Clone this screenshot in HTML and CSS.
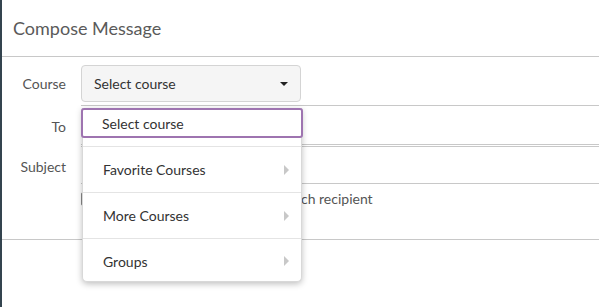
FILE: index.html
```html
<!DOCTYPE html>
<html lang="en">
<head>
    <meta charset="UTF-8">
    <title>Compose Message</title>
    <link rel="stylesheet" href="styles.css">
</head>
<body>
    <div class="dialog">
        <div class="dialog-header">
            <h1>Compose Message</h1>
        </div>

        <form class="compose-form">
            <div class="row">
                <label class="label">Course</label>
                <button type="button" class="select-btn">
                    <span>Select course</span>
                    <span class="caret"></span>
                </button>
            </div>
            <div class="row row-input">
                <label class="label">To</label>
                <div class="text-input"></div>
            </div>
            <div class="row row-input subject">
                <label class="label">Subject</label>
                <div class="text-input"></div>
            </div>
            <div class="row check-row">
                <span class="label"></span>
                <span class="checkbox"></span>
                <span class="check-text">Send an individual message to each recipient</span>
            </div>
        </form>

        <div class="dialog-footer"></div>

        <!-- Course dropdown menu, open -->
        <ul class="course-menu">
            <li class="menu-item focused">Select course</li>
            <li class="menu-item group">Favorite Courses <span class="arrow"></span></li>
            <li class="menu-item group">More Courses <span class="arrow"></span></li>
            <li class="menu-item group last">Groups <span class="arrow"></span></li>
        </ul>
    </div>
</body>
</html>
```

FILE: styles.css
```css
body {
    margin: 0;
    font-family: Lato, "Open Sans", sans-serif;
    background: #fff;
    color: #333;
    overflow: hidden;
}

.dialog {
    position: relative;
    height: 307px;
    border-left: 2px solid #34444f;
}

.dialog-header {
    height: 56px;
    border-bottom: 1px solid #c8c8c8;
    display: flex;
    align-items: center;
    padding-left: 11px;
}

.dialog-header h1 {
    margin: 0;
    font-size: 18px;
    font-weight: normal;
    color: #5a5a5a;
}

.compose-form {
    padding-top: 8px;
    height: 174px;
    border-bottom: 1px solid #c8c8c8;
}

.row {
    display: flex;
    align-items: center;
}

.label {
    width: 64px;
    flex: none;
    text-align: right;
    padding-right: 15px;
    font-size: 14px;
    color: #555;
}

.select-btn {
    width: 220px;
    height: 37px;
    background: #f5f5f5;
    border: 1px solid #d4d4d4;
    border-radius: 4px;
    display: flex;
    align-items: center;
    justify-content: space-between;
    padding: 0 12px 0 12px;
    font-family: inherit;
    font-size: 14px;
    color: #333;
}

.caret {
    width: 0;
    height: 0;
    border-left: 4px solid transparent;
    border-right: 4px solid transparent;
    border-top: 4px solid #222;
}

.row-input {
    margin-top: 3px;
}

.row-input .label {
    align-self: flex-start;
    padding-top: 13px;
}

.subject .label {
    padding-top: 12px;
}

.text-input {
    flex: 1;
    height: 38px;
    border-top: 1px solid #c8c8c8;
    border-bottom: 1px solid #c8c8c8;
}

.subject {
    margin-top: 1px;
}

.subject .text-input {
    height: 36px;
}

.check-row {
    margin-top: 6px;
}

.checkbox {
    width: 12px;
    height: 12px;
    border: 1px solid #888;
    border-radius: 2px;
    margin-right: 4px;
}

.check-text {
    font-size: 14px;
    color: #555;
}

.dialog-footer {
    height: 66px;
}

.course-menu {
    position: absolute;
    left: 80px;
    top: 108px;
    width: 218px;
    margin: 0;
    padding: 0;
    list-style: none;
    background: #fff;
    border: 1px solid #d8d8d8;
    border-top: none;
    border-radius: 0 0 5px 5px;
    box-shadow: 0 2px 6px rgba(0, 0, 0, 0.25);
}

.menu-item {
    display: flex;
    align-items: center;
    justify-content: space-between;
    font-size: 14px;
    color: #333;
    padding: 0 12px 0 20px;
}

.menu-item.focused {
    height: 26px;
    margin: 0 -2px 8px;
    padding-left: 19px;
    border: 2px solid #9e74b0;
    border-radius: 3px;
}

.menu-item.group {
    height: 45px;
    border-top: 1px solid #e4e4e4;
}

.menu-item.last {
    height: 43px;
    padding-top: 2px;
    box-sizing: border-box;
}

.arrow {
    width: 0;
    height: 0;
    border-top: 5px solid transparent;
    border-bottom: 5px solid transparent;
    border-left: 5px solid #c8c8c8;
}
```
